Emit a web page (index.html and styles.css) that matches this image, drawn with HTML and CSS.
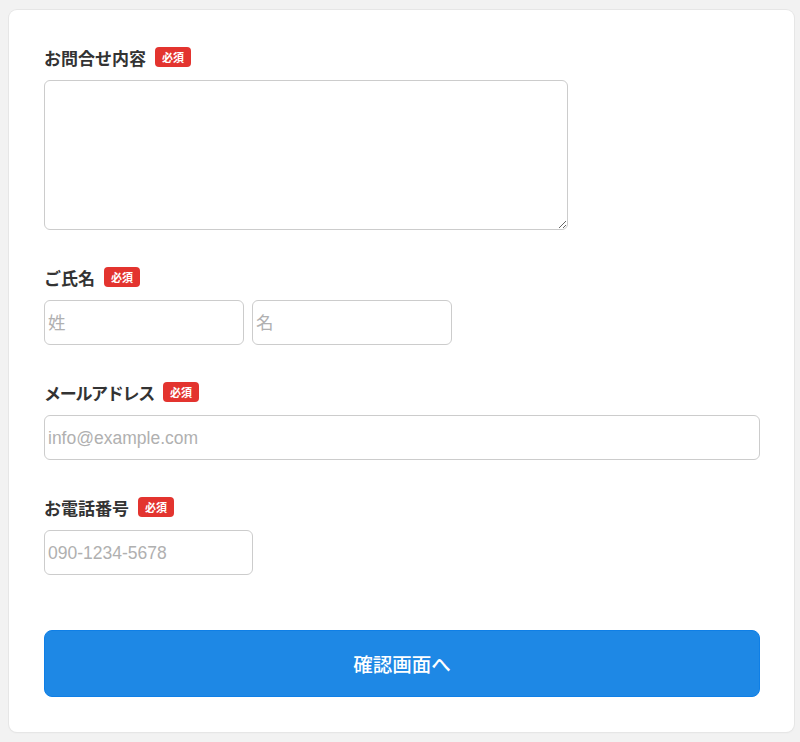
FILE: index.html
```html
<!DOCTYPE html>
<html lang="ja">
<head>
<meta charset="utf-8">
<title>お問合せ</title>
<link rel="stylesheet" href="styles.css">
</head>
<body>
<form class="card">
  <div class="group">
    <label class="label">お問合せ内容<span class="badge">必須</span></label>
    <textarea class="textarea"></textarea>
  </div>
  <div class="group">
    <label class="label">ご氏名<span class="badge">必須</span></label>
    <div class="name-row">
      <input class="input input-name" type="text" placeholder="姓">
      <input class="input input-name" type="text" placeholder="名">
    </div>
  </div>
  <div class="group">
    <label class="label label-kana">メールアドレス<span class="badge">必須</span></label>
    <input class="input input-full" type="email" placeholder="info@example.com">
  </div>
  <div class="group">
    <label class="label">お電話番号<span class="badge">必須</span></label>
    <input class="input input-tel" type="tel" placeholder="090-1234-5678">
  </div>
  <button class="submit" type="button">確認画面へ</button>
</form>
</body>
</html>
```
FILE: styles.css
```css
html, body {
  margin: 0;
  padding: 0;
}
body {
  background: #f2f2f2;
  padding: 10px 6px 10px 9px;
  font-family: "Liberation Sans", "Noto Sans CJK JP", sans-serif;
  color: #333;
}
.card {
  box-sizing: border-box;
  width: 785px;
  height: 722px;
  background: #fff;
  border-radius: 8px;
  box-shadow: 0 0 0 1px #e6e6e6, 0 1px 2px rgba(0,0,0,0.06);
  padding: 36px 35px 0 35px;
  display: flex;
  flex-direction: column;
}
.group {
  display: flex;
  flex-direction: column;
  margin-bottom: 36px;
}
.label {
  display: flex;
  align-items: center;
  font-family: "Noto Sans CJK JP", sans-serif;
  font-size: 17px;
  font-weight: 700;
  color: #333;
  height: 22px;
  margin-bottom: 12px;
}
.label-kana {
  letter-spacing: -1.3px;
}
.badge {
  display: inline-flex;
  align-items: center;
  justify-content: center;
  margin-left: 9px;
  background: #e3342f;
  color: #fff;
  font-size: 11px;
  font-weight: 700;
  letter-spacing: 0;
  border-radius: 4px;
  height: 20px;
  padding: 0 5px;
  box-sizing: border-box;
  width: 36px;
}
.textarea {
  box-sizing: border-box;
  width: 524px;
  height: 150px;
  border: 1px solid #cccccc;
  border-radius: 6px;
  margin: 0;
  padding: 4px;
  resize: vertical;
}
.name-row {
  display: flex;
  gap: 8px;
}
.input {
  box-sizing: border-box;
  height: 45px;
  border: 1px solid #cccccc;
  border-radius: 6px;
  margin: 0;
  padding: 1px 3px 0;
  font-family: "Liberation Sans", "Noto Sans CJK JP", sans-serif;
  font-size: 17.5px;
  color: #333;
  background: #fff;
}
.input::placeholder {
  color: #b0b0b0;
}
.input-name {
  width: 200px;
}
.input-full {
  width: 716px;
}
.input-tel {
  width: 209px;
}
.submit {
  box-sizing: border-box;
  width: 716px;
  height: 67px;
  margin-top: 19px;
  background: #1e88e5;
  border: 1px solid #0f7fe6;
  border-radius: 8px;
  color: #fff;
  font-family: "Noto Sans CJK JP", sans-serif;
  font-size: 19.5px;
  font-weight: 500;
}
```
